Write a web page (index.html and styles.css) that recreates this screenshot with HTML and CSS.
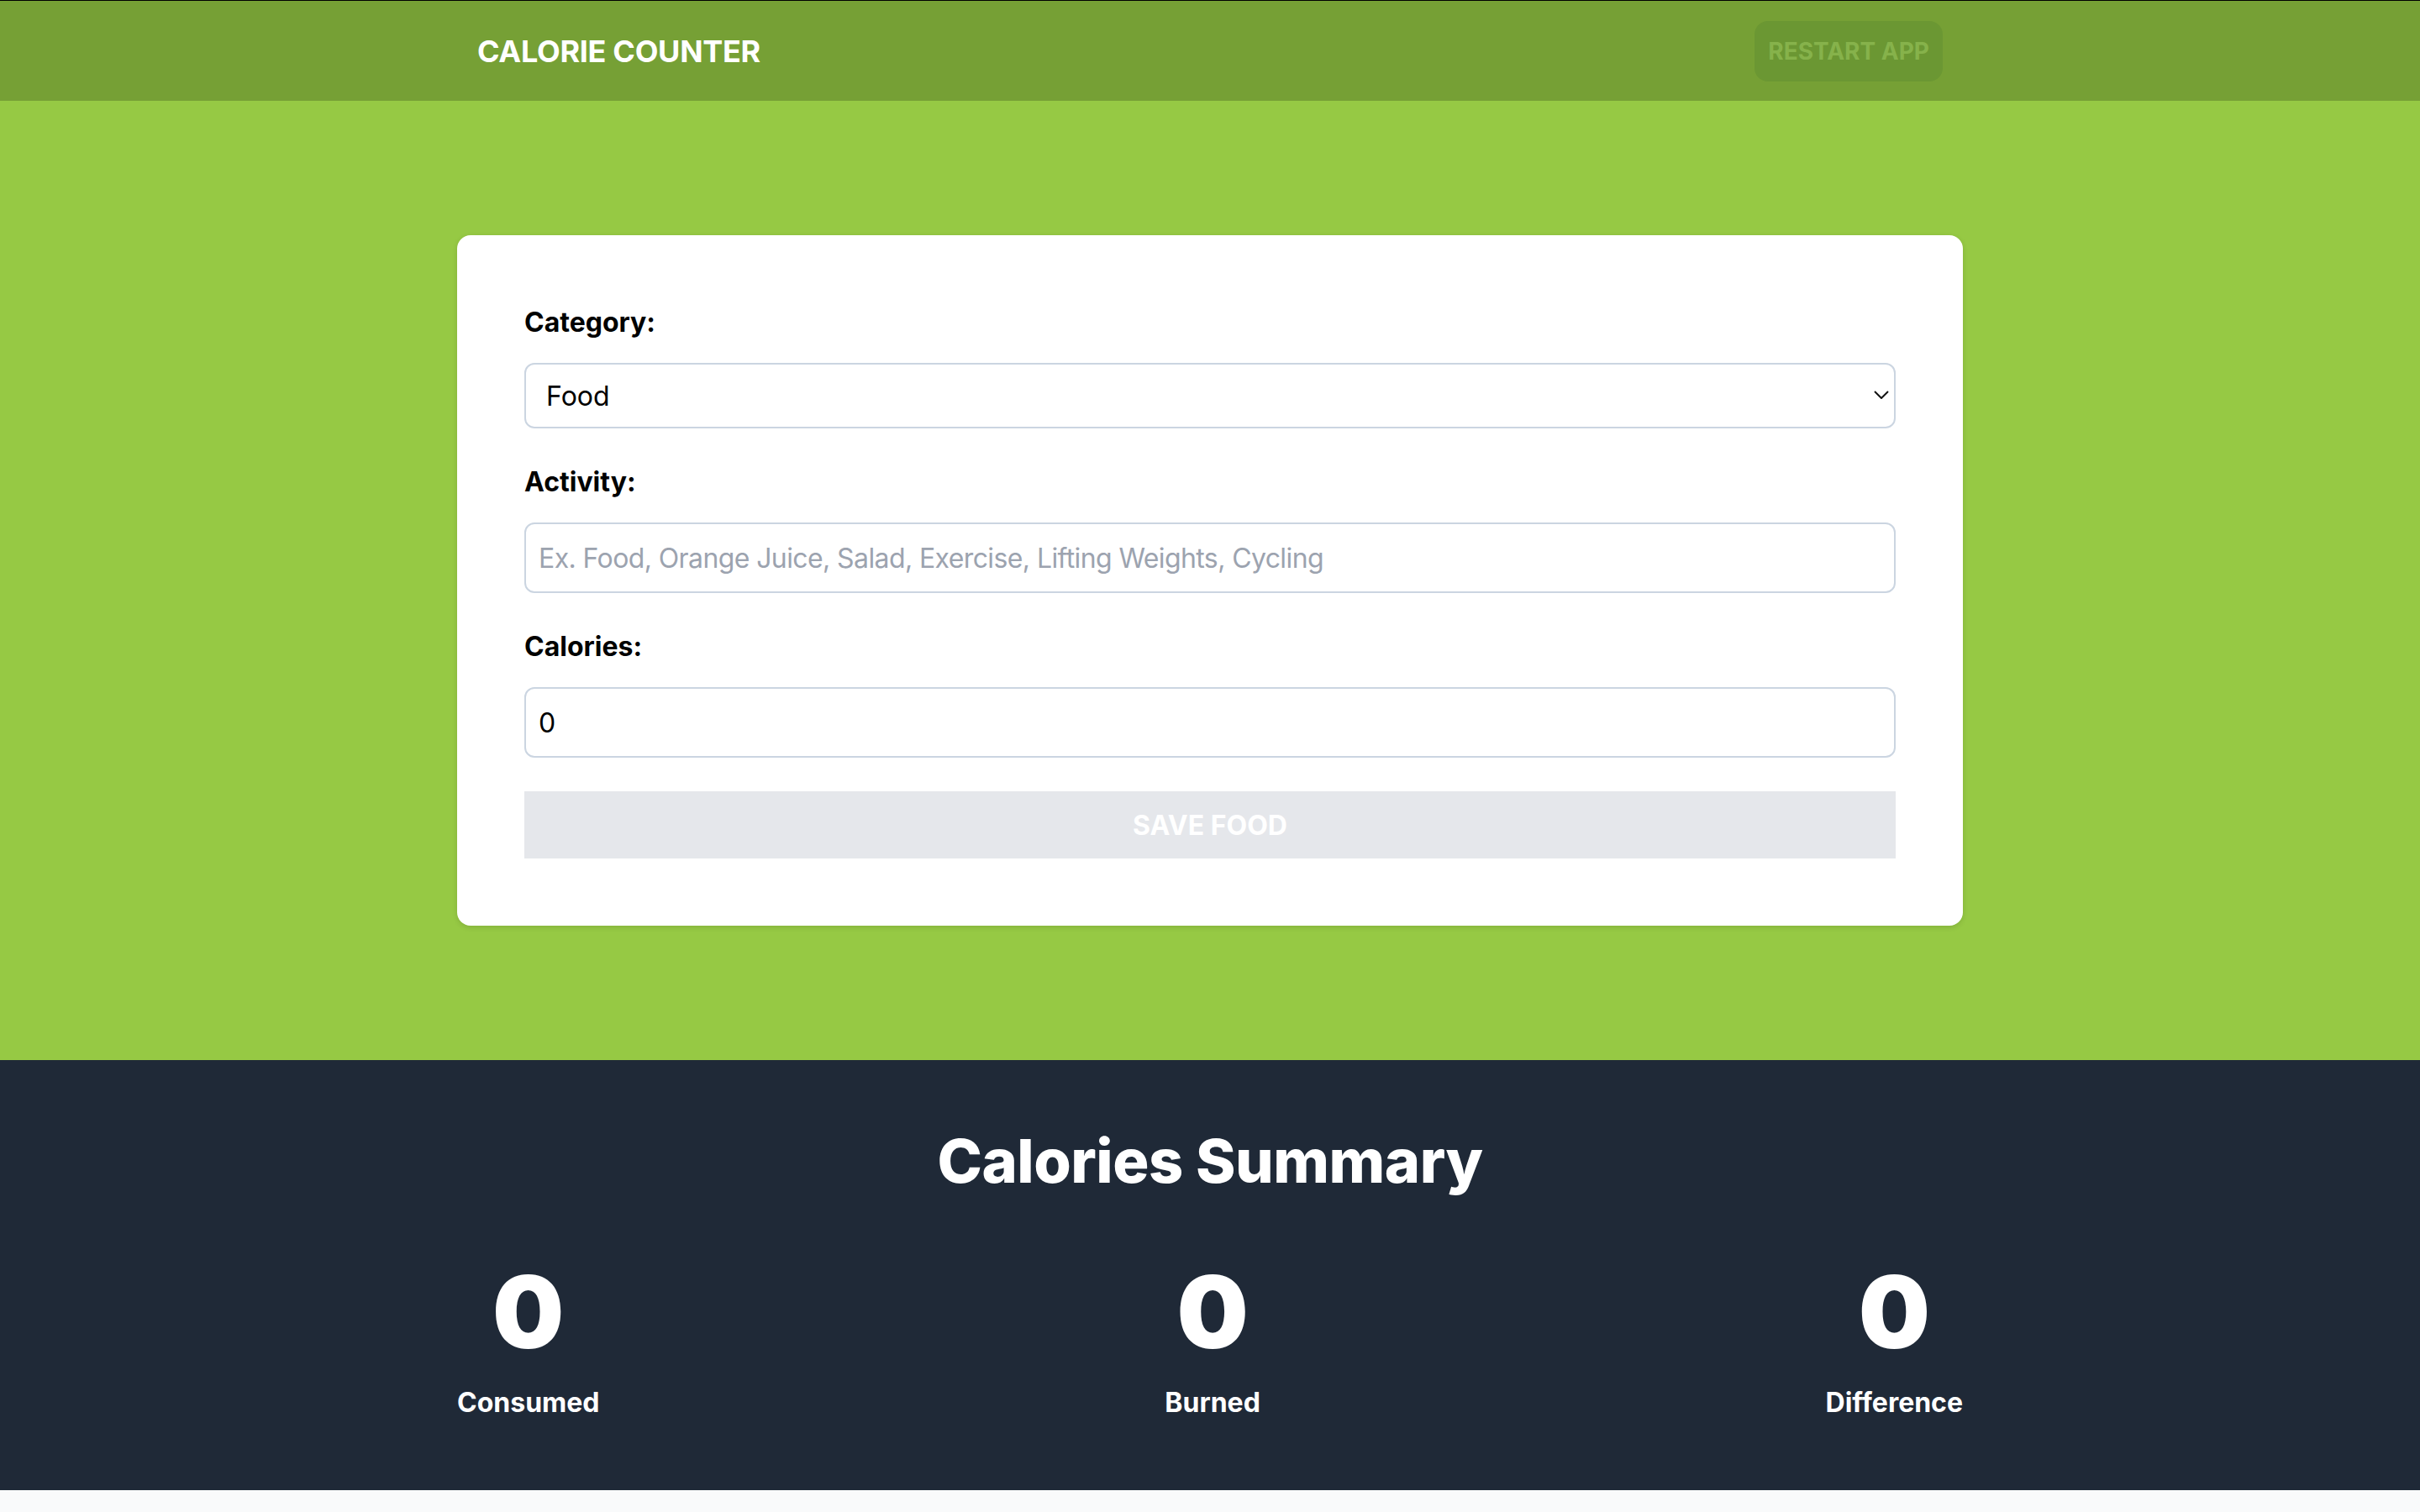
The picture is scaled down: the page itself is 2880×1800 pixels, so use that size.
FILE: index.html
```html
<!DOCTYPE html>
<html lang="en">
<head>
<meta charset="utf-8">
<title>Calorie Counter</title>
<link rel="stylesheet" href="styles.css">
</head>
<body>
<header class="topbar">
  <div class="topbar-inner">
    <h1 class="brand">CALORIE COUNTER</h1>
    <button class="restart-btn" disabled>RESTART APP</button>
  </div>
</header>

<main class="hero">
  <form class="card">
    <div class="field">
      <label class="field-label" for="category">Category:</label>
      <div class="select-wrap">
        <select id="category" class="control select">
          <option>Food</option>
          <option>Exercise</option>
        </select>
        <svg class="chevron" width="18" height="10" viewBox="0 0 18 10" aria-hidden="true"><path d="M1 1 L9 9 L17 1" fill="none" stroke="#111" stroke-width="2"/></svg>
      </div>
    </div>
    <div class="field">
      <label class="field-label" for="activity">Activity:</label>
      <input id="activity" class="control input" type="text" placeholder="Ex. Food, Orange Juice, Salad, Exercise, Lifting Weights, Cycling">
    </div>
    <div class="field">
      <label class="field-label" for="calories">Calories:</label>
      <input id="calories" class="control input" type="number" value="0">
    </div>
    <button class="save-btn" type="button" disabled>SAVE FOOD</button>
  </form>
</main>

<section class="summary">
  <h2 class="summary-title">Calories Summary</h2>
  <div class="stats">
    <div class="stat">
      <p class="stat-num">0</p>
      <p class="stat-label">Consumed</p>
    </div>
    <div class="stat">
      <p class="stat-num">0</p>
      <p class="stat-label">Burned</p>
    </div>
    <div class="stat">
      <p class="stat-num">0</p>
      <p class="stat-label">Difference</p>
    </div>
  </div>
</section>
</body>
</html>
```

FILE: styles.css
```css
* { box-sizing: border-box; }

body {
  margin: 0;
  background: #f9fafb;
  font-family: Inter, "Liberation Sans", sans-serif;
  color: #000;
}

.topbar {
  background: #76a035;
  border-top: 1px solid #000;
}

.topbar-inner {
  max-width: 1792px;
  height: 119px;
  margin: 0 auto;
  padding: 0 24px;
  display: flex;
  align-items: center;
  justify-content: space-between;
}

.brand {
  margin: 0;
  color: #fff;
  font-size: 36px;
  line-height: 56px;
  font-weight: 700;
  letter-spacing: -0.3px;
}

.restart-btn {
  font-family: inherit;
  font-size: 28px;
  line-height: 40px;
  font-weight: 700;
  padding: 16px 16px;
  border: 0;
  border-radius: 16px;
  background: #6b9733;
  color: #86b24b;
}

.hero {
  background: #96c944;
  padding: 160px 0;
}

.card {
  max-width: 1792px;
  margin: 0 auto;
  background: #fff;
  border-radius: 16px;
  padding: 80px;
  box-shadow: 0 2px 6px rgba(0, 0, 0, 0.12);
}

.field {
  margin-bottom: 40px;
}

.field-label {
  display: block;
  font-size: 32px;
  line-height: 48px;
  font-weight: 700;
  margin-bottom: 24px;
}

.control {
  display: block;
  width: 100%;
  font-family: inherit;
  font-size: 32px;
  color: #000;
  background: #fff;
  border: 2px solid #cbd5e1;
  border-radius: 12px;
  outline: none;
}

.select-wrap {
  position: relative;
}

.select {
  height: 78px;
  padding: 0 24px;
  appearance: none;
  -webkit-appearance: none;
}

.chevron {
  position: absolute;
  right: 8px;
  top: 33px;
  pointer-events: none;
}

.input {
  height: 84px;
  padding: 0 15px;
  letter-spacing: -0.6px;
  -moz-appearance: textfield;
}

.input::-webkit-outer-spin-button,
.input::-webkit-inner-spin-button {
  -webkit-appearance: none;
  margin: 0;
}

.input::placeholder {
  color: #9ca3af;
}

.save-btn {
  display: block;
  width: 100%;
  height: 80px;
  border: 0;
  border-radius: 0;
  background: #e5e7eb;
  color: #fff;
  font-family: inherit;
  font-size: 32px;
  font-weight: 700;
}

.summary {
  background: #1f2937;
  padding: 80px 0;
  color: #fff;
}

.summary-title {
  margin: 0 0 80px;
  text-align: center;
  font-size: 72px;
  line-height: 80px;
  font-weight: 800;
  letter-spacing: -0.5px;
}

.stats {
  max-width: 1792px;
  margin: 0 auto;
  display: flex;
  justify-content: space-between;
}

.stat {
  text-align: center;
}

.stat-num {
  margin: 0;
  font-size: 120px;
  line-height: 120px;
  font-weight: 900;
}

.stat-label {
  margin: 24px 0 0;
  font-size: 32px;
  line-height: 48px;
  font-weight: 700;
}
```
